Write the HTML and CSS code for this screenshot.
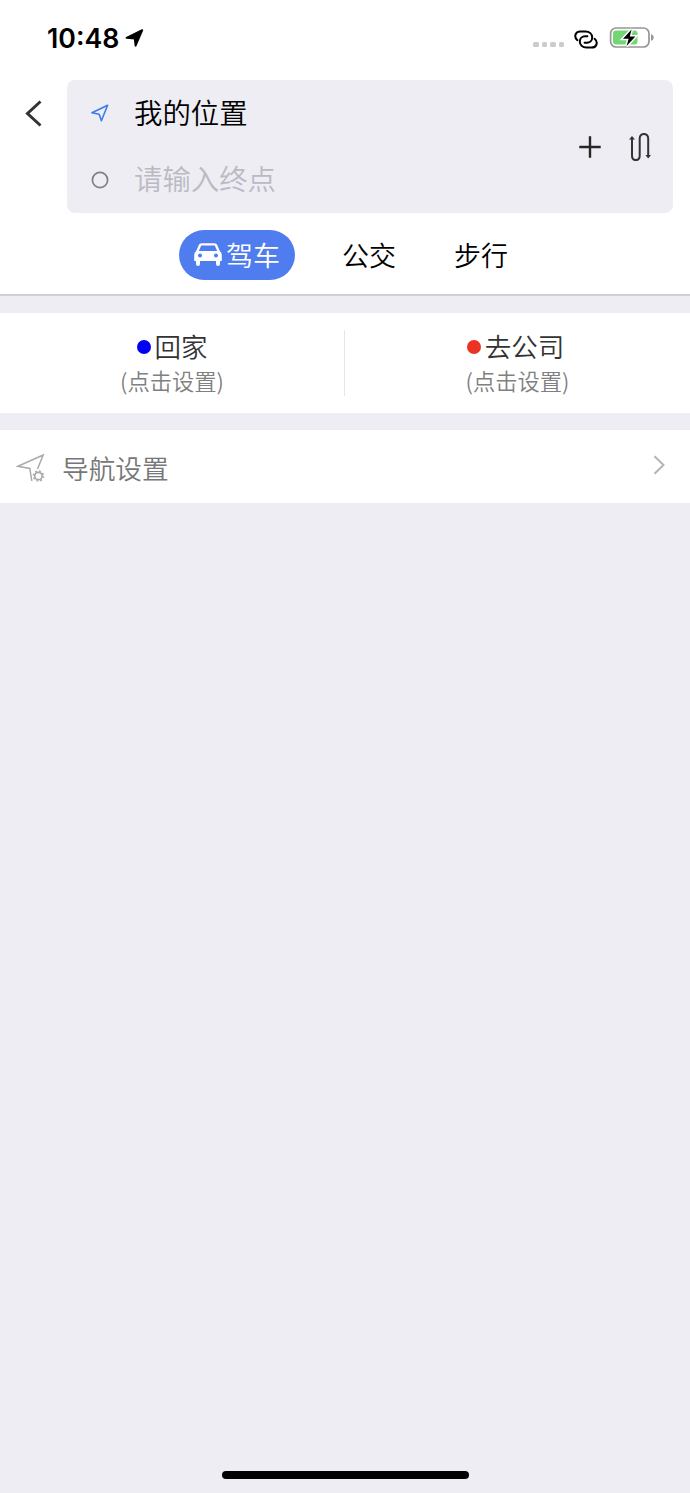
FILE: index.html
```
<!DOCTYPE html>
<html lang="zh-CN">
<head>
    <meta charset="UTF-8">
    <title>路线规划</title>
    <link rel="stylesheet" href="styles.css">
</head>
<body>
    <header class="header">
        <div class="status-bar">
            <span class="time">10:48</span>
            <svg class="location" width="19" height="19" viewBox="0 0 19 19">
                <path d="M17.2 1.2 L10.6 16.6 L9.8 9.6 L1.6 8.8 Z" fill="#000" stroke="#000" stroke-width="2" stroke-linejoin="round"/>
            </svg>
            <div class="signal"><i></i><i></i><i></i><i></i></div>
            <svg class="link" width="24" height="20" viewBox="0 0 24 20" fill="none" stroke="#000" stroke-width="2" stroke-linecap="round">
                <path d="M3.4 10.2 C-.4 7 1.2 1.4 6.2 1.4 H11.6 C15.4 1.4 18.2 4 18.2 7.4 C18.2 10.6 15.8 12.8 12.8 12.8 H10.6"/>
                <path d="M20.6 8.8 C24.4 12 22.8 17.6 17.8 17.6 H12.4 C8.6 17.6 5.8 15 5.8 11.6 C5.8 8.4 8.2 6.2 11.2 6.2 H13.4"/>
            </svg>
            <svg class="battery" width="46" height="24" viewBox="0 0 46 24">
                <rect x="1.6" y="2" width="38.4" height="19" rx="5.5" fill="#fff" stroke="#969696" stroke-width="1.7"/>
                <rect x="4" y="4.5" width="24.5" height="14" rx="3" fill="#72d673"/>
                <path d="M42 8 Q44.8 9.4 44.8 11.5 T42 15 Z" fill="#969696"/>
                <path d="M22.6 3.5 L14 12.8 H19.6 L17.6 20 L26.4 10.4 H20.8 Z" fill="#000" stroke="#fff" stroke-width="3" paint-order="stroke"/>
            </svg>
        </div>

        <div class="search">
            <a class="back" href="#">
                <svg width="18" height="28" viewBox="0 0 18 28" fill="none" stroke="#333" stroke-width="3">
                    <path d="M15.5 1.5 L2.5 13.5 L15.5 25.5"/>
                </svg>
            </a>
            <div class="search-box">
                <div class="fields">
                    <div class="field">
                        <svg width="18" height="18" viewBox="0 0 18 18" fill="none" stroke="#3d7bea" stroke-width="1.6" stroke-linejoin="round">
                            <path d="M16.6 1.2 L1 8.8 L8.2 10.2 L10.4 16.8 Z"/>
                        </svg>
                        <span>我的位置</span>
                    </div>
                    <div class="field">
                        <svg width="18" height="18" viewBox="0 0 18 18" fill="none" stroke="#808080" stroke-width="1.7">
                            <circle cx="9" cy="9" r="7.6"/>
                        </svg>
                        <span class="placeholder">请输入终点</span>
                    </div>
                </div>
                <svg class="add" width="22" height="22" viewBox="0 0 22 22" fill="none" stroke="#262626" stroke-width="2.4">
                    <path d="M11 .3 V21.7 M.3 11 H21.7"/>
                </svg>
                <svg class="swap" width="22" height="28" viewBox="0 0 22 28" fill="none" stroke="#333" stroke-width="2">
                    <path d="M3 5 V22.5 C3 28.6 10.7 28.6 10.7 22.5 V5.5 C10.7 -.6 19.2 -.6 19.2 5.5 V23"/>
                    <path d="M3 3 L6 6.6 H0 Z M19.2 25.4 L22 22 H16.4 Z" fill="#333" stroke="none"/>
                </svg>
            </div>
        </div>

        <nav class="tabs">
            <a class="tab active" href="#">
                <svg width="28" height="24" viewBox="0 0 28 24">
                    <path d="M7.4.3 H20.6 Q22.5.4 23.2 2 L25.8 8 Q27.8 9.4 27.8 12 V18 H26 V21 Q26 23 24 23 T22 21 V18 H6 V21 Q6 23 4 23 T2 21 V18 H.2 V12 Q.2 9.4 2.2 8 L4.8 2 Q5.5.4 7.4.3 Z M7.2 2.4 L4.8 8 H23.2 L20.8 2.4 Z" fill="#fff" fill-rule="evenodd"/>
                    <circle cx="6" cy="12.5" r="2" fill="#4f7cef"/>
                    <circle cx="22" cy="12.5" r="2" fill="#4f7cef"/>
                </svg>
                <span>驾车</span>
            </a>
            <a class="tab" href="#"><span>公交</span></a>
            <a class="tab" href="#"><span>步行</span></a>
        </nav>
    </header>

    <section class="shortcuts">
        <a class="shortcut" href="#">
            <p class="name"><i class="dot home"></i><span>回家</span></p>
            <p class="hint">(点击设置)</p>
        </a>
        <a class="shortcut" href="#">
            <p class="name"><i class="dot company"></i><span>去公司</span></p>
            <p class="hint">(点击设置)</p>
        </a>
    </section>

    <a class="settings" href="#">
        <svg width="30" height="30" viewBox="0 0 30 30" fill="none" stroke="#aaa" stroke-width="1.5">
            <path d="M21.5 16 L27.2 2 L2 13.3 L13.8 15.5 L15.8 28"/>
            <circle cx="22.4" cy="23" r="3.7" stroke-width="1.7"/>
            <circle cx="22.4" cy="23" r="5" stroke-width="1.5" stroke-dasharray="1.9 2.03"/>
        </svg>
        <span>导航设置</span>
        <svg class="arrow" width="13" height="20" viewBox="0 0 13 20" fill="none" stroke="#b5b5b5" stroke-width="2">
            <path d="M1.5 1.2 L10.5 10 L1.5 18.8"/>
        </svg>
    </a>

    <div class="home-indicator"></div>
</body>
</html>
```
FILE: styles.css
```
* {
    margin: 0;
    padding: 0;
    box-sizing: border-box;
}
body {
    display: flex;
    flex-direction: column;
    height: 1493px;
    font-family: "Noto Sans CJK SC", sans-serif;
    font-weight: 350;
    background: #eeedf3;
    color: #000;
}
a {
    color: inherit;
    text-decoration: none;
}
svg {
    display: block;
    flex-shrink: 0;
}
.header {
    height: 296px;
    background: #fff;
    border-bottom: 2px solid #d0d0d3;
}

/* status bar */
.status-bar {
    display: flex;
    align-items: center;
    height: 80px;
    padding: 0 35px 4px 47px;
}
.time {
    width: 72px;
    font-family: Inter, sans-serif;
    font-size: 26.7px;
    font-weight: 600;
    white-space: nowrap;
}
.location {
    margin-left: 6px;
}
.signal {
    display: flex;
    gap: 3px;
    margin: 13px 11px 0 auto;
}
.signal i {
    width: 5.5px;
    height: 5.5px;
    border-radius: 1.5px;
    background: #ccc;
}
.link {
    margin: 3px 11px 0 -1px;
}

/* start and end point */
.search {
    display: flex;
    height: 133px;
    padding-right: 17px;
}
.back {
    width: 67px;
    padding: 20px 0 0 25px;
}
.search-box {
    display: flex;
    align-items: center;
    flex: 1;
    padding: 0 22px 0 24px;
    background: #eeedf3;
    border-radius: 8px;
}
.fields {
    flex: 1;
}
.field {
    display: flex;
    align-items: center;
    gap: 25px;
    height: 66.5px;
    font-size: 28.4px;
}
.field span {
    padding-bottom: 4px;
}
.placeholder {
    color: #bbbac4;
}
.add {
    margin-right: 28px;
}

/* travel mode */
.tabs {
    display: flex;
    align-items: center;
    gap: 58px;
    margin: 17px 0 0 179px;
    font-size: 27px;
}
.tab span {
    display: block;
    padding-bottom: 1px;
}
.tab.active {
    display: flex;
    align-items: center;
    gap: 4px;
    width: 116px;
    height: 50px;
    margin-right: -11px;
    padding-left: 15px;
    border-radius: 25px;
    background: #4f7cef;
    color: #fff;
}

/* home and company */
.shortcuts {
    display: flex;
    height: 100px;
    margin-top: 17px;
    padding: 17px 0;
    background: #fff;
}
.shortcut {
    width: 50%;
    text-align: center;
}
.shortcut:first-child {
    border-right: 1px solid #e6e6e6;
}
.name {
    display: flex;
    align-items: center;
    justify-content: center;
    gap: 4px;
    height: 33px;
    padding-right: 4px;
    font-size: 26.5px;
    line-height: 31px;
    color: #333;
}
.name span {
    padding-bottom: 2px;
}
.shortcut:first-child .name {
    padding-right: 0;
}
.dot {
    width: 14px;
    height: 14px;
    border-radius: 50%;
}
.home {
    background: #0000f5;
}
.company {
    background: #ea3323;
}
.hint {
    font-size: 22.3px;
    line-height: 34px;
    color: #808080;
}

.settings {
    display: flex;
    align-items: center;
    height: 73px;
    margin-top: 17px;
    padding: 3px 24px 0 16px;
    background: #fff;
    font-size: 26.7px;
    color: #777;
}
.settings span {
    margin-left: 16px;
    padding-bottom: 1px;
}
.arrow {
    margin: -6px 0 0 auto;
}

.home-indicator {
    width: 247px;
    height: 8px;
    margin: auto auto 14px;
    border-radius: 4px;
    background: #000;
}
```
